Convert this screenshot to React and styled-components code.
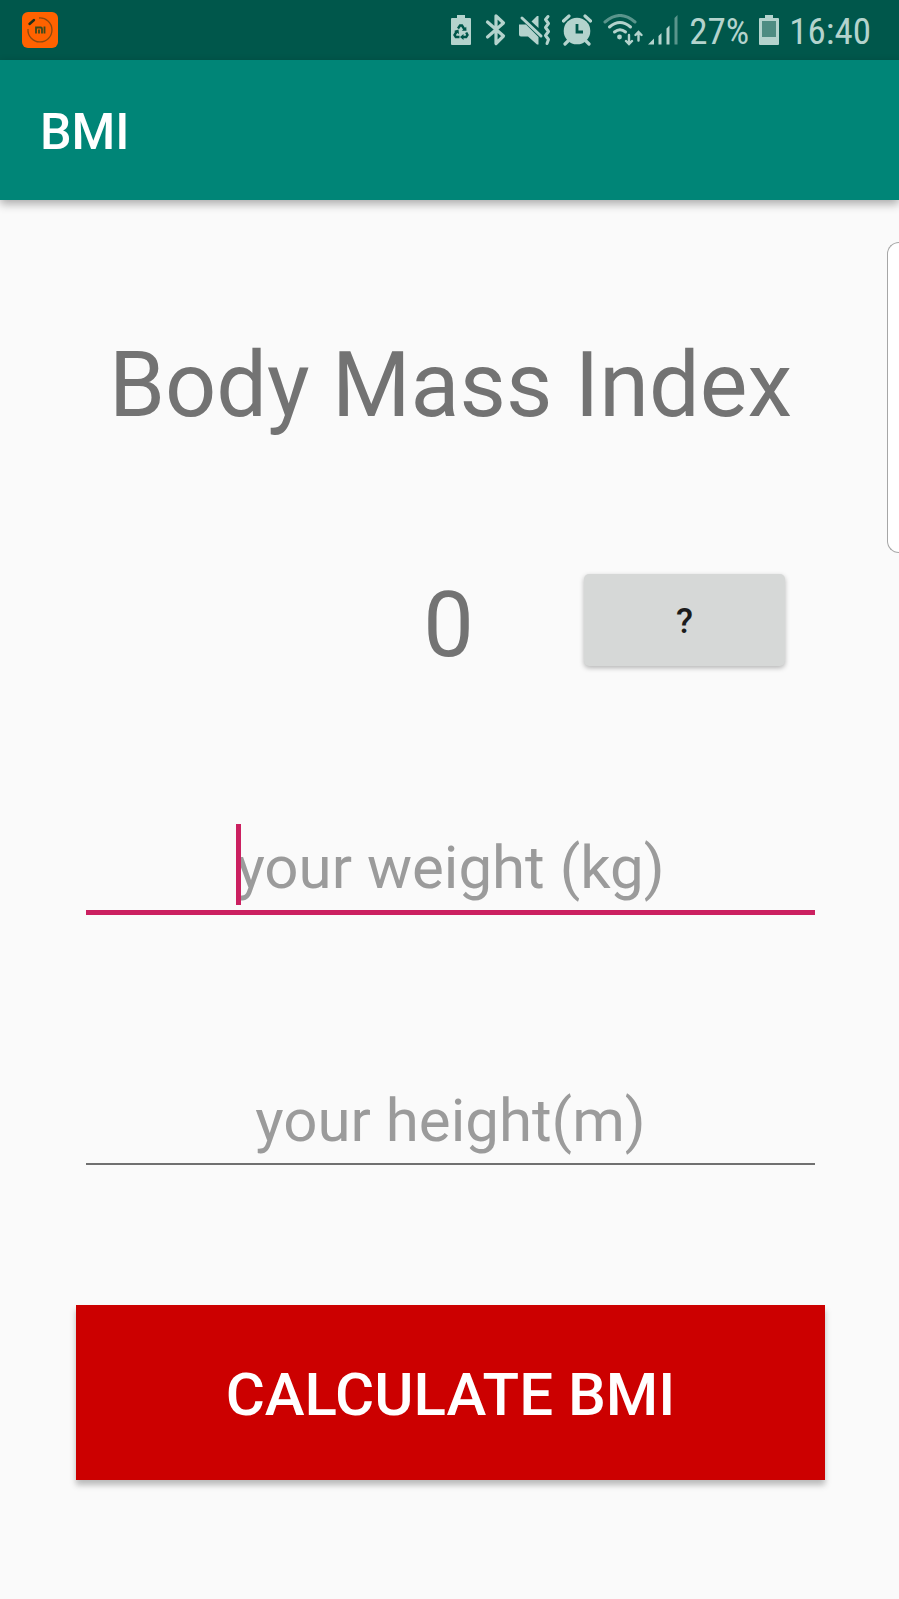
import React, { useState } from 'react';
import styled, { createGlobalStyle } from 'styled-components';

const GlobalStyle = createGlobalStyle`
  *, *::before, *::after { box-sizing: border-box; }
  body {
    margin: 0;
    background: #fafafa;
    font-family: Roboto, "Liberation Sans", sans-serif;
  }
`;

const Screen = styled.div`
  position: relative;
  min-height: 100vh;
  overflow-x: hidden;
  background: #fafafa;
`;

const StatusBar = styled.div`
  display: flex;
  align-items: center;
  justify-content: space-between;
  height: 60px;
  padding: 0 28px 0 22px;
  background: #00574b;
  color: #b4d3cd;
`;

const StatusGroup = styled.div`
  display: flex;
  align-items: center;
  gap: ${({ $gap }) => $gap}px;
`;

const StatusText = styled.span`
  padding-top: 3px;
  font-family: "Roboto Condensed", Roboto, sans-serif;
  font-size: 37px;
  line-height: 40px;
`;

const Icon = styled.svg`
  display: block;
  flex: none;
`;

const AppBar = styled.header`
  display: flex;
  align-items: center;
  height: 140px;
  padding: 4px 40px 0;
  background: #008577;
  box-shadow: 0 4px 9px rgba(0, 0, 0, 0.32);
`;

const AppTitle = styled.h1`
  margin: 0;
  color: #fff;
  font-size: 50px;
  font-weight: 500;
  line-height: 60px;
`;

const Content = styled.main`
  display: flex;
  flex-direction: column;
  padding: 134px 74px 40px 76px;
`;

const Display = styled.div`
  margin: 0;
  color: #737373;
  font-size: 90px;
  font-weight: 400;
  line-height: 104px;
  text-align: center;
`;

const ResultRow = styled.div`
  display: grid;
  grid-template-columns: 1fr auto 1fr;
  align-items: start;
  margin-top: 136px;
  padding: 0 40px 0 36px;
`;

const HelpButton = styled.button`
  grid-column: 3;
  justify-self: end;
  width: 201px;
  height: 92px;
  padding: 4px 0 0;
  border: 0;
  border-radius: 5px;
  background: #d6d8d7;
  box-shadow: 0 2px 5px rgba(0, 0, 0, 0.28);
  color: #1c1c1c;
  font: 500 35px/40px Roboto, sans-serif;
`;

const Form = styled.form`
  display: flex;
  flex-direction: column;
  gap: 136px;
  margin-top: 146px;
`;

const Fields = styled.div`
  display: flex;
  flex-direction: column;
  gap: 161px;
  padding: 0 10px;
`;

const Field = styled.label`
  position: relative;
  display: block;
  height: 92px;
`;

const FieldInput = styled.input`
  display: block;
  width: 100%;
  height: ${({ $active }) => ($active ? 91 : 88)}px;
  padding: 0;
  border: 0;
  border-bottom: ${({ $active }) => ($active ? '5px solid #cb2060' : '2px solid #707070')};
  border-radius: 0;
  outline: 0;
  background: transparent;
  caret-color: transparent;
  color: #212121;
  font: 400 60px/86px Roboto, sans-serif;
  text-align: center;

  &::placeholder {
    color: #9b9b9b;
    opacity: 1;
  }
`;

const Caret = styled.span`
  position: absolute;
  top: 0;
  left: calc(50% - 215px);
  width: 5px;
  height: 81px;
  background: #cb2060;
`;

const CalculateButton = styled.button`
  height: 175px;
  padding: 4px 0 0;
  border: 0;
  background: #cc0000;
  box-shadow: 0 5px 6px rgba(0, 0, 0, 0.26);
  color: #fff;
  font: 500 60px/70px Roboto, sans-serif;
`;

const EdgePanel = styled.aside`
  position: absolute;
  top: 242px;
  right: 0;
  width: 12px;
  height: 311px;
  border: 1px solid #a6a6a6;
  border-right: 0;
  border-radius: 14px 0 0 14px;
  background: #fff;
`;

const MiFitIcon = () => (
  <Icon width="36" height="36" viewBox="0 0 36 36" fill="none">
    <rect width="36" height="36" rx="6" fill="#ff6200" />
    <path d="M17 6A12 12 0 1 1 6 17" stroke="#8a4a10" strokeWidth="1.3" />
    <path d="M7.5 12L12 8" stroke="#20301a" strokeWidth="2.4" strokeLinecap="round" />
    <path d="M14 21.5V15.5H18.8Q20 15.5 20 17V21.5M17 17.5V21.5M22.5 14.5V21.5" stroke="#3d4a1c" strokeWidth="1.8" />
  </Icon>
);

const RecycleBatteryIcon = () => (
  <Icon width="20" height="32" viewBox="0 0 20 32">
    <path d="M6 1H14V4H19Q20 4 20 5V30Q20 31 19 31H1Q0 31 0 30V5Q0 4 1 4H6Z" fill="currentColor" />
    <g fill="none" stroke="#00574b" strokeWidth="2.4">
      <path d="M7 14.5L9 11.5H11L13.5 15.5" />
      <path d="M15.2 18.5L16.5 21L15.2 23H11.5" />
      <path d="M8.5 23H4.8L3.5 21L6 17" />
    </g>
    <path d="M10.8 16.8L15.5 16.8L15.2 12.8ZM12.5 20L9 23L12.5 26ZM3 17L7.5 15.5L8 20Z" fill="#00574b" />
  </Icon>
);

const BluetoothIcon = () => (
  <Icon width="26" height="32" viewBox="-4 0 26 32" fill="none" stroke="currentColor" strokeWidth="3.2" strokeLinejoin="round" strokeLinecap="round">
    <path d="M1.5 8L17.5 22L10 29.5V1.8L17.5 9L1.5 23" />
  </Icon>
);

const MuteVibrateIcon = () => (
  <Icon width="32" height="32" viewBox="0 0 32 32">
    <path d="M0 10.5H7L19.5 23V30.5H18L9 22.5H2Q0 22.5 0 20.5Z" fill="currentColor" />
    <path d="M12.5 7.5L18 2H19.5V14Z" fill="currentColor" />
    <path d="M3 4L22 22" stroke="currentColor" strokeWidth="3" strokeLinecap="round" />
    <path d="M29 2.5L26.5 5.5L29.5 9.5L26.5 13.5L29.5 17.5L26.5 21.5L29.5 25.5L28 29.5" fill="none" stroke="currentColor" strokeWidth="3" strokeLinecap="round" strokeLinejoin="round" />
  </Icon>
);

const AlarmIcon = () => (
  <Icon width="30" height="32" viewBox="0 0 30 32">
    <circle cx="15" cy="17" r="13.3" fill="currentColor" />
    <path d="M1.5 7L7 2M28.5 7L23 2M6 27L3 30M24 27L27 30" stroke="currentColor" strokeWidth="3.2" strokeLinecap="round" />
    <path d="M15 10V18H21" fill="none" stroke="#00574b" strokeWidth="2.8" />
  </Icon>
);

const WifiIcon = () => (
  <Icon width="40" height="32" viewBox="0 0 40 32" fill="none" stroke="currentColor" strokeWidth="3" strokeLinecap="round">
    <path d="M2 8Q17 -5 32 8" opacity="0.5" />
    <path d="M6.5 13Q17 4 27.5 13" />
    <path d="M11.5 18Q17 13.5 22.5 18" />
    <circle cx="16.500" cy="23" r="2.4" fill="currentColor" stroke="none" />
    <path d="M26 21V29.500M23 27L26 30L29 27M35.5 26.500V18.500M32.500 21L35.500 18L38.500 21" strokeWidth="2.4" />
  </Icon>
);

const SignalIcon = () => (
  <Icon width="30" height="32" viewBox="0 0 30 32" fill="currentColor">
    <path d="M0 30.5L6 24.5V30.5ZM10.5 22L13.5 19V30.5H10.5ZM18.5 14.5L21.5 11.5V30.5H18.5Z" />
    <path d="M26.5 4L29.5 1V30.5H26.5Z" opacity="0.5" />
  </Icon>
);

const BatteryIcon = () => (
  <Icon width="20" height="32" viewBox="0 0 20 32">
    <path d="M6 1H14V4H19Q20 4 20 5V30Q20 31 19 31H1Q0 31 0 30V5Q0 4 1 4H6Z" fill="currentColor" />
    <path d="M3 7H17V23H3Z" fill="#4e8c82" />
  </Icon>
);

export default function App() {
  const [active, setActive] = useState('weight');
  const [weight, setWeight] = useState('');
  const [height, setHeight] = useState('');
  const [bmi, setBmi] = useState('0');

  const calculate = (event) => {
    event.preventDefault();
    const value = Number(weight) / Number(height) ** 2;
    setBmi(Number.isFinite(value) ? value.toFixed(1) : '0');
  };

  return (
    <Screen>
      <GlobalStyle />
      <StatusBar>
        <MiFitIcon />
        <StatusGroup $gap={11}>
          <RecycleBatteryIcon />
          <BluetoothIcon />
          <MuteVibrateIcon />
          <AlarmIcon />
          <StatusGroup $gap={5}>
            <WifiIcon />
            <SignalIcon />
          </StatusGroup>
          <StatusGroup $gap={10}>
            <StatusText>27%</StatusText>
            <BatteryIcon />
            <StatusText>16:40</StatusText>
          </StatusGroup>
        </StatusGroup>
      </StatusBar>
      <AppBar>
        <AppTitle>BMI</AppTitle>
      </AppBar>
      <Content>
        <Display as="h2">Body Mass Index</Display>
        <ResultRow>
          <span />
          <Display as="output">{bmi}</Display>
          <HelpButton type="button">?</HelpButton>
        </ResultRow>
        <Form onSubmit={calculate}>
          <Fields>
            <Field>
              <FieldInput
                aria-label="your weight (kg)"
                placeholder="your weight (kg)"
                inputMode="decimal"
                autoFocus
                $active={active === 'weight'}
                value={weight}
                onFocus={() => setActive('weight')}
                onChange={(event) => setWeight(event.target.value)}
              />
              {active === 'weight' && weight === '' && <Caret />}
            </Field>
            <Field>
              <FieldInput
                aria-label="your height(m)"
                placeholder="your height(m)"
                inputMode="decimal"
                $active={active === 'height'}
                value={height}
                onFocus={() => setActive('height')}
                onChange={(event) => setHeight(event.target.value)}
              />
            </Field>
          </Fields>
          <CalculateButton type="submit">CALCULATE BMI</CalculateButton>
        </Form>
      </Content>
      <EdgePanel />
    </Screen>
  );
}
